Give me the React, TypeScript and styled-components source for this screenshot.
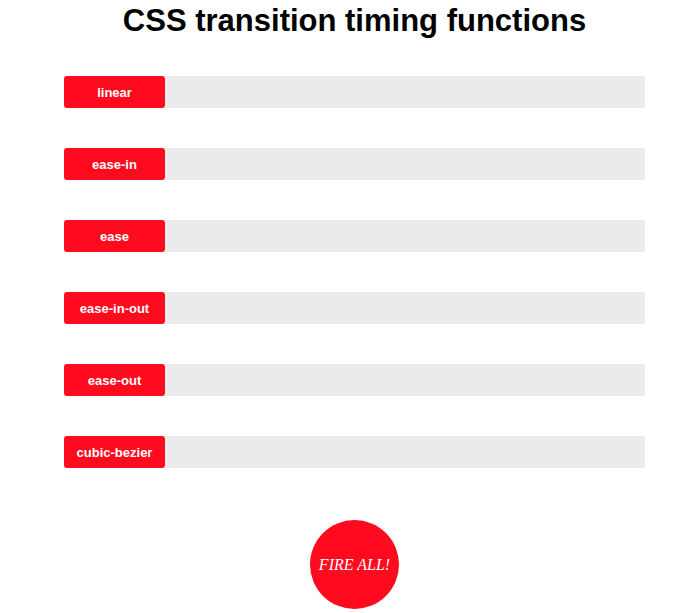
import styled, { createGlobalStyle } from "styled-components";

const GlobalStyle = createGlobalStyle`
  html, body {
    margin: 0;
    padding: 0;
    background: #ffffff;
  }
  body {
    font-family: "Liberation Sans", Arial, sans-serif;
  }
`;

const Page = styled.div`
  width: 581px;
  margin: 0 0 0 64px;
  display: flex;
  flex-direction: column;
  align-items: center;
`;

const Title = styled.h1`
  margin: 3px 0 0;
  font-size: 31px;
  font-weight: bold;
  line-height: 36px;
  color: #000;
  white-space: nowrap;
`;

const Rows = styled.div`
  width: 100%;
  margin-top: 37px;
  display: flex;
  flex-direction: column;
  gap: 40px;
`;

const Track = styled.div`
  height: 32px;
  background: #ebebeb;
  border-radius: 3px;
  display: flex;
`;

const Label = styled.div`
  width: 101px;
  height: 32px;
  background: #ff0a1e;
  border-radius: 3px;
  color: #fff;
  font-size: 13px;
  font-weight: bold;
  display: flex;
  align-items: center;
  justify-content: center;
`;

const FireButton = styled.button`
  margin-top: 52px;
  width: 89px;
  height: 89px;
  border: none;
  border-radius: 50%;
  background: #ff0a1e;
  color: #fff;
  font-family: "Liberation Serif", "Times New Roman", serif;
  font-style: italic;
  font-size: 16px;
  padding: 0;
  cursor: pointer;
`;

const timings = [
  "linear",
  "ease-in",
  "ease",
  "ease-in-out",
  "ease-out",
  "cubic-bezier",
];

function App() {
  return (
    <>
      <GlobalStyle />
      <Page>
        <Title>CSS transition timing functions</Title>
        <Rows>
          {timings.map((t) => (
            <Track key={t}>
              <Label>{t}</Label>
            </Track>
          ))}
        </Rows>
        <FireButton>FIRE ALL!</FireButton>
      </Page>
    </>
  );
}

export default App;
